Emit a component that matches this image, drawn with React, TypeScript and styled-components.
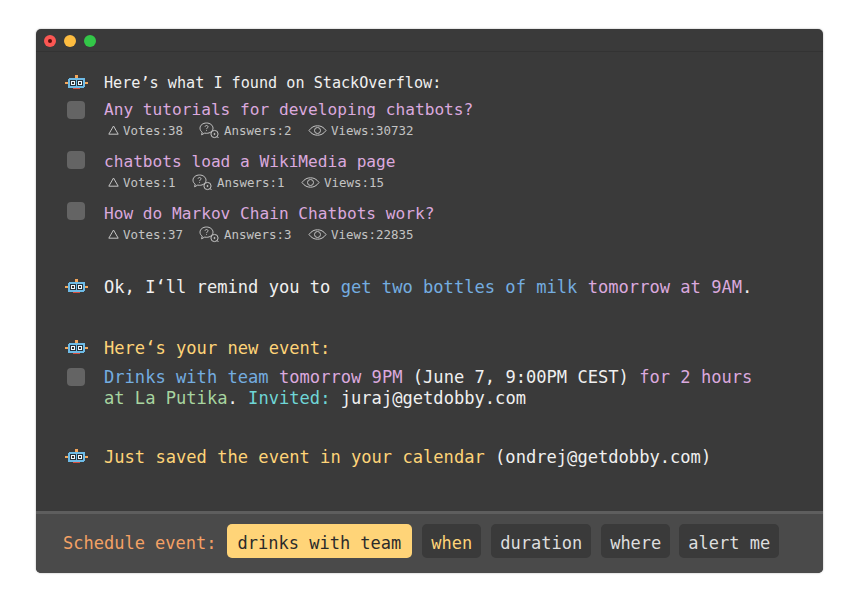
import React from "react";
import styled, { createGlobalStyle } from "styled-components";

const Global = createGlobalStyle`
  html, body { margin: 0; padding: 0; background: #fff; }
  body { font-family: "DejaVu Sans Mono", "Liberation Mono", monospace; }
`;

const Page = styled.div`
  width: 859px;
  height: 600px;
  padding: 29px 36px 27px;
  box-sizing: border-box;
`;

const Win = styled.div`
  width: 787px;
  height: 544px;
  display: flex;
  flex-direction: column;
  background: #3a3a3a;
  border-radius: 5px;
  overflow: hidden;
  box-shadow: 0 0 2px rgba(0, 0, 0, 0.35);
`;

const TitleBar = styled.div`
  height: 23px;
  flex: none;
  box-sizing: border-box;
  display: flex;
  align-items: center;
  gap: 8px;
  padding: 2px 0 0 8px;
  border-bottom: 1px solid #333;
`;

const Dot = styled.span<{ $c: string }>`
  width: 12px;
  height: 12px;
  border-radius: 50%;
  background: ${(p) => p.$c};
  display: flex;
  align-items: center;
  justify-content: center;
`;

const Pip = styled.span`
  width: 4px;
  height: 4px;
  border-radius: 50%;
  background: #5a0d0a;
`;

const Body = styled.div`
  flex: 1;
  padding: 21px 0 0 29px;
  color: #f0f0f0;
  font-size: 17.1px;
  line-height: 21px;
`;

const BotRow = styled.div<{ $mt?: number }>`
  display: flex;
  align-items: center;
  gap: 16px;
  height: 21px;
  margin-top: ${(p) => p.$mt ?? 0}px;
  white-space: pre;
`;

const Bot = styled.svg`
  width: 23px;
  height: 17px;
  flex: none;
`;

const Item = styled.div<{ $mt?: number }>`
  display: flex;
  gap: 19px;
  margin-top: ${(p) => p.$mt ?? 0}px;
`;

const Check = styled.span<{ $top: number }>`
  width: 18px;
  height: 18px;
  flex: none;
  margin: ${(p) => p.$top}px 0 0 2px;
  background: #646464;
  border-radius: 4px;
`;

const Col = styled.div`
  display: flex;
  flex-direction: column;
`;

const Line = styled.div<{ $size?: number }>`
  white-space: pre;
  ${(p) => (p.$size ? `font-size: ${p.$size}px;` : "")}
`;

const Tone = styled.span<{ $c: string }>`
  color: ${(p) => p.$c};
`;

const Meta = styled.div`
  display: flex;
  align-items: center;
  height: 20px;
  padding-left: 4px;
  font-size: 12.45px;
  color: #c4c4c4;
  white-space: pre;
`;

const Stat = styled.span<{ $w: number }>`
  display: flex;
  align-items: center;
  gap: 4px;
  width: ${(p) => p.$w}px;
`;

const Footer = styled.div`
  height: 62px;
  flex: none;
  box-sizing: border-box;
  display: flex;
  align-items: center;
  gap: 10px;
  background: #4a4a4a;
  border-top: 3px solid #5e5e5e;
  padding: 0 0 5px 27px;
  font-size: 17px;
  white-space: pre;
`;

const Label = styled.span`
  color: #f4a165;
  margin-top: 4px;
`;

const Chip = styled.span<{ $active?: boolean; $text?: string; $tight?: boolean }>`
  height: 34px;
  box-sizing: border-box;
  display: flex;
  align-items: center;
  padding: 4px ${(p) => (p.$active ? 11 : 9)}px 0;
  margin-right: ${(p) => (p.$tight ? -1 : 0)}px;
  border-radius: 5px;
  background: ${(p) => (p.$active ? "#ffd478" : "#3a3a3a")};
  color: ${(p) => p.$text ?? (p.$active ? "#2b2b2b" : "#dedede")};
`;

const BotIcon = () => (
  <Bot viewBox="0 0 23 17" shapeRendering="crispEdges">
    <rect x="10" y="0" width="3" height="3" fill="#f2a65a" />
    <rect x="0" y="7" width="3" height="2" fill="#f2a65a" />
    <rect x="20" y="7" width="3" height="2" fill="#f2a65a" />
    <rect x="3" y="3" width="17" height="10" rx="2" fill="#6ebbe6" />
    <rect x="5" y="5" width="6" height="6" fill="#26323a" />
    <rect x="12" y="5" width="6" height="6" fill="#26323a" />
    <rect x="6" y="6" width="4" height="4" fill="#eef7fb" />
    <rect x="13" y="6" width="4" height="4" fill="#eef7fb" />
    <rect x="7" y="7" width="2" height="2" fill="#333" />
    <rect x="14" y="7" width="2" height="2" fill="#333" />
    <rect x="8" y="13" width="7" height="1" fill="#d9503f" />
  </Bot>
);

const Triangle = () => (
  <svg width="11" height="10" viewBox="0 0 11 10" fill="none" stroke="#c4c4c4" strokeWidth="1">
    <path d="M5.5 1 L10.2 9.2 H0.8 Z" />
  </svg>
);

const Bubbles = () => (
  <svg width="21" height="17" viewBox="0 0 21 17" fill="none" stroke="#c4c4c4" strokeWidth="1">
    <path d="M7.500 1C3.900 1 1 3.200 1 6.200c0 1.600.8 3 2.200 3.900L2.600 12.800l3.100-1.700c.6.1 1.200.2 1.800.2 3.600 0 6.500-2.200 6.500-5.100S11.100 1 7.500 1Z" />
    <circle cx="15.500" cy="12" r="3.600" />
    <path d="M18 14.500l1.500 1.500" />
    <circle cx="15.500" cy="12" r="0.600" fill="#c4c4c4" />
    <path d="M6 4.700c.2-.8.8-1.200 1.500-1.200.8 0 1.500.5 1.500 1.300 0 1.200-1.500 1.200-1.500 2.300M7.500 8.300v.7" />
  </svg>
);

const Eye = () => (
  <svg width="19" height="11" viewBox="0 0 19 11" fill="none" stroke="#c4c4c4" strokeWidth="1">
    <path d="M1 5.500C3.500 2 6.300 .8 9.500 .8s6 1.200 8.500 4.700c-2.500 3.500-5.300 4.700-8.500 4.700S3.500 9 1 5.500Z" />
    <circle cx="9.500" cy="5.500" r="3" />
  </svg>
);

const Stats = ({ v, a, w, q }: { v: string; a: string; w: string; q: number }) => (
  <Meta>
    <Stat $w={q}>
      <Triangle />
      {`Votes:${v}`}
    </Stat>
    <Stat $w={109}>
      <Bubbles />
      {`Answers:${a}`}
    </Stat>
    <Stat $w={130}>
      <Eye />
      {`Views:${w}`}
    </Stat>
  </Meta>
);

const PINK = "#dba9de";
const BLUE = "#74ade0";
const YEL = "#ffd478";
const GREEN = "#a8d5a0";
const CYAN = "#6fd6d6";

export default function App() {
  return (
    <Page>
      <Global />
      <Win>
        <TitleBar>
          <Dot $c="#fc5753">
            <Pip />
          </Dot>
          <Dot $c="#fdbc40" />
          <Dot $c="#33c748" />
        </TitleBar>
        <Body>
          <BotRow>
            <BotIcon />
            <Line $size={15.15}>Here’s what I found on StackOverflow:</Line>
          </BotRow>
          <Item $mt={5}>
            <Check $top={2} />
            <Col>
              <Line $size={16.15}>
                <Tone $c={PINK}>Any tutorials for developing chatbots?</Tone>
              </Line>
              <Stats v="38" a="2" w="30732" q={91} />
            </Col>
          </Item>
          <Item $mt={11}>
            <Check $top={0} />
            <Col>
              <Line $size={16.15}>
                <Tone $c={PINK}>chatbots load a WikiMedia page</Tone>
              </Line>
              <Stats v="1" a="1" w="15" q={84} />
            </Col>
          </Item>
          <Item $mt={11}>
            <Check $top={-1} />
            <Col>
              <Line $size={16.15}>
                <Tone $c={PINK}>How do Markov Chain Chatbots work?</Tone>
              </Line>
              <Stats v="37" a="3" w="22835" q={91} />
            </Col>
          </Item>
          <BotRow $mt={33}>
            <BotIcon />
            <Line>
              Ok, I‘ll remind you to <Tone $c={BLUE}>get two bottles of milk</Tone>{" "}
              <Tone $c={PINK}>tomorrow at 9AM</Tone>.
            </Line>
          </BotRow>
          <BotRow $mt={40}>
            <BotIcon />
            <Line>
              <Tone $c={YEL}>Here‘s your new event:</Tone>
            </Line>
          </BotRow>
          <Item $mt={8}>
            <Check $top={1} />
            <Col>
              <Line>
                <Tone $c={BLUE}>Drinks with team</Tone> <Tone $c={PINK}>tomorrow 9PM</Tone> (June 7, 9:00PM CEST){" "}
                <Tone $c={PINK}>for 2 hours</Tone>
              </Line>
              <Line>
                <Tone $c={GREEN}>at La Putika</Tone>. <Tone $c={CYAN}>Invited:</Tone> juraj@getdobby.com
              </Line>
            </Col>
          </Item>
          <BotRow $mt={38}>
            <BotIcon />
            <Line>
              <Tone $c={YEL}>Just saved the event in your calendar</Tone> (ondrej@getdobby.com)
            </Line>
          </BotRow>
        </Body>
        <Footer>
          <Label>Schedule event:</Label>
          <Chip $active>drinks with team</Chip>
          <Chip $text={YEL}>when</Chip>
          <Chip>duration</Chip>
          <Chip $tight>where</Chip>
          <Chip>alert me</Chip>
        </Footer>
      </Win>
    </Page>
  );
}
